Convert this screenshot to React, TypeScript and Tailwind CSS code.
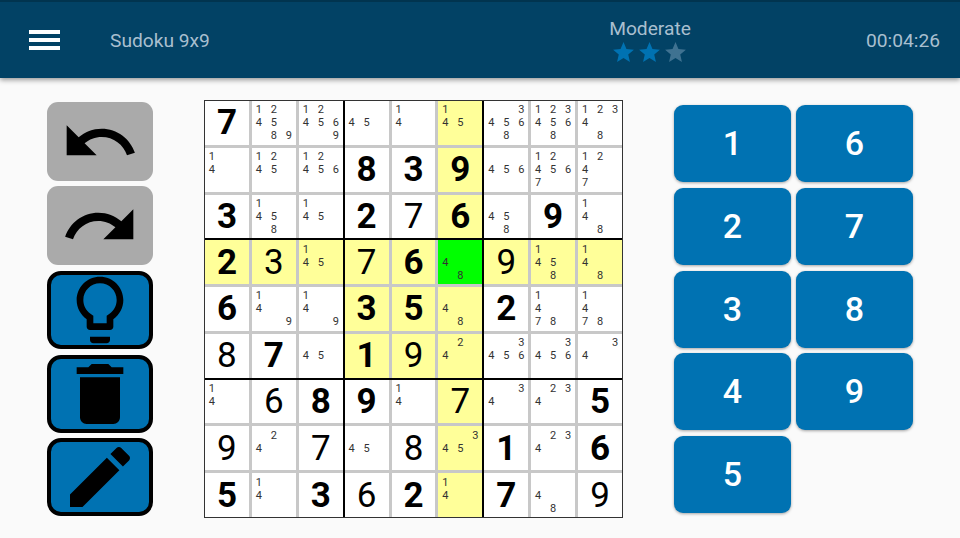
import { Fragment } from 'react'

type Cell = { v?: number; bold?: boolean; n?: number[]; bg?: string }

const g = (v: number): Cell => ({ v, bold: true })
const r = (v: number): Cell => ({ v })
const n = (...d: number[]): Cell => ({ n: d })

const rows: Cell[][] = [
  [g(7), n(1, 2, 4, 5, 8, 9), n(1, 2, 4, 5, 6, 9), n(4, 5), n(1, 4), n(1, 4, 5), n(3, 4, 5, 6, 8), n(1, 2, 3, 4, 5, 6, 8), n(1, 2, 3, 4, 8)],
  [n(1, 4), n(1, 2, 4, 5), n(1, 2, 4, 5, 6), g(8), g(3), g(9), n(4, 5, 6), n(1, 2, 4, 5, 6, 7), n(1, 2, 4, 7)],
  [g(3), n(1, 4, 5, 8), n(1, 4, 5), g(2), r(7), g(6), n(4, 5, 8), g(9), n(1, 4, 8)],
  [g(2), r(3), n(1, 4, 5), r(7), g(6), n(4, 8), r(9), n(1, 4, 5, 8), n(1, 4, 8)],
  [g(6), n(1, 4, 9), n(1, 4, 9), g(3), g(5), n(4, 8), g(2), n(1, 4, 7, 8), n(1, 4, 7, 8)],
  [r(8), g(7), n(4, 5), g(1), r(9), n(2, 4), n(3, 4, 5, 6), n(3, 4, 5, 6), n(3, 4)],
  [n(1, 4), r(6), g(8), g(9), n(1, 4), r(7), n(3, 4), n(2, 3, 4), g(5)],
  [r(9), n(2, 4), r(7), n(4, 5), r(8), n(3, 4, 5), g(1), n(2, 3, 4), g(6)],
  [g(5), n(1, 4), g(3), r(6), g(2), n(1, 4), g(7), n(4, 8), r(9)],
]

const isYellow = (row: number, col: number) =>
  row === 3 || col === 5 || (row >= 3 && row <= 5 && col >= 3 && col <= 5)

const icons = {
  undo: 'M12.5 8c-2.65 0-5.05.99-6.9 2.6L2 7v9h9l-3.62-3.62c1.39-1.16 3.16-1.88 5.12-1.88 3.54 0 6.55 2.31 7.6 5.5l2.37-.78C21.08 11.03 17.15 8 12.5 8z',
  redo: 'M18.4 10.6C16.55 8.99 14.15 8 11.5 8c-4.65 0-8.58 3.03-9.96 7.22L3.9 16c1.05-3.19 4.05-5.5 7.6-5.5 1.95 0 3.73.72 5.12 1.88L13 16h9V7l-3.6 3.6z',
  bulb: 'M9 21c0 .55.45 1 1 1h4c.55 0 1-.45 1-1v-1H9v1zm3-19C8.14 2 5 5.14 5 9c0 2.38 1.19 4.47 3 5.74V17c0 .55.45 1 1 1h6c.55 0 1-.45 1-1v-2.26c1.81-1.27 3-3.36 3-5.74 0-3.86-3.14-7-7-7zm2.85 11.1l-.85.6V16h-4v-2.3l-.85-.6C7.8 12.16 7 10.63 7 9c0-2.76 2.24-5 5-5s5 2.24 5 5c0 1.63-.8 3.16-2.15 4.1z',
  trash: 'M6 19c0 1.1.9 2 2 2h8c1.1 0 2-.9 2-2V7H6v12zM19 4h-3.5l-1-1h-5l-1 1H5v2h14V4z',
  pencil: 'M3 17.25V21h3.75L17.81 9.94l-3.75-3.75L3 17.25zM20.71 7.04c.39-.39.39-1.02 0-1.41l-2.34-2.34c-.39-.39-1.02-.39-1.41 0l-1.83 1.83 3.75 3.75 1.83-1.83z',
}

const star = 'M12 17.27L18.18 21l-1.64-7.19L22 9.24l-7.19-.61L12 2 9.19 8.63 2 9.24l5.46 4.57L5.82 21z'

function ToolBtn({ d, kind, className }: { d: string; kind: 'grey' | 'blue'; className: string }) {
  const skin = kind === 'grey' ? 'bg-[#aaaaaa] rounded-[11px]' : 'bg-[#0072b2] border-[4px] border-black rounded-[14px]'
  return (
    <div className={`w-[106px] flex items-center justify-center overflow-hidden ${skin} ${className}`}>
      <svg viewBox="0 0 24 24" className="w-[80px] h-[80px] shrink-0" fill="#000"><path d={d} /></svg>
    </div>
  )
}

function Notes({ digits }: { digits: number[] }) {
  return (
    <div className="grid grid-cols-[repeat(3,15px)] grid-rows-[repeat(3,13px)] font-['Roboto',sans-serif] text-[11px] leading-[13px] text-center text-[#333]">
      {[1, 2, 3, 4, 5, 6, 7, 8, 9].map((d) => (
        <span key={d}>{digits.includes(d) ? d : ''}</span>
      ))}
    </div>
  )
}

function SudokuCell({ cell, row, col }: { cell: Cell; row: number; col: number }) {
  const selected = row === 3 && col === 5
  const bg = selected ? 'bg-[#00ff00]' : isYellow(row, col) ? 'bg-[#ffff99]' : 'bg-white'
  return (
    <div className={`flex items-center justify-center overflow-hidden ${bg}`}>
      {cell.n ? (
        <Notes digits={cell.n} />
      ) : (
        <span className={`font-['Roboto',sans-serif] text-[35px] leading-none text-black ${cell.bold ? 'font-bold' : 'font-normal'}`}>{cell.v}</span>
      )}
    </div>
  )
}

function Box({ br, bc }: { br: number; bc: number }) {
  const idx = [0, 1, 2]
  return (
    <div className="grid grid-cols-3 grid-rows-3 gap-[3px] bg-[#c8c8c8]">
      {idx.map((i) => (
        <Fragment key={i}>
          {idx.map((j) => (
            <SudokuCell key={j} cell={rows[br * 3 + i][bc * 3 + j]} row={br * 3 + i} col={bc * 3 + j} />
          ))}
        </Fragment>
      ))}
    </div>
  )
}

function NumBtn({ v }: { v: number }) {
  return (
    <div className="h-[77px] rounded-[9px] bg-[#0072b2] flex items-center justify-center text-white text-[34px] font-medium font-['Roboto',sans-serif] shadow-[0_1px_3px_rgba(0,0,0,0.35)]">
      {v}
    </div>
  )
}

export default function App() {
  return (
    <div className="w-[960px] h-[538px] bg-[#fafafa] overflow-hidden font-['Roboto',sans-serif]">
      <header className="relative h-[78px] bg-[#024265] border-t-[2px] border-[#01344f] flex items-center shadow-[0_2px_5px_rgba(0,0,0,0.4)] text-[19.2px] text-[#a9bfcf]">
        <div className="w-[590px] flex items-center">
          <div className="ml-[29px] w-[31px] flex flex-col gap-[4px]">
            <div className="h-[4px] bg-white" />
            <div className="h-[4px] bg-white" />
            <div className="h-[4px] bg-white" />
          </div>
          <span className="ml-[50px] pt-[2px]">Sudoku 9x9</span>
        </div>
        <div className="w-[120px] flex flex-col items-center pt-[2px]">
          <span className="leading-[22px]">Moderate</span>
          <div className="flex gap-[1px] -ml-[2px]">
            <svg viewBox="0 0 24 24" className="w-[25px] h-[25px]" fill="#0072b2"><path d={star} /></svg>
            <svg viewBox="0 0 24 24" className="w-[25px] h-[25px]" fill="#0072b2"><path d={star} /></svg>
            <svg viewBox="0 0 24 24" className="w-[25px] h-[25px]" fill="#3f7291"><path d={star} /></svg>
          </div>
        </div>
        <span className="flex-1 text-right pr-[20px] pt-[2px]">00:04:26</span>
      </header>

      <main className="flex items-start">
        <div className="ml-[47px] mt-[24px] flex flex-col">
          <ToolBtn d={icons.undo} kind="grey" className="h-[79px]" />
          <ToolBtn d={icons.redo} kind="grey" className="h-[79px] mt-[5px]" />
          <ToolBtn d={icons.bulb} kind="blue" className="h-[78px] mt-[6px]" />
          <ToolBtn d={icons.trash} kind="blue" className="h-[78px] mt-[6px]" />
          <ToolBtn d={icons.pencil} kind="blue" className="h-[78px] mt-[5px]" />
        </div>

        <div className="ml-[51px] mt-[22px] w-[419px] h-[418px] grid grid-cols-3 grid-rows-3 gap-[2px] bg-black border border-[#333]">
          {[0, 1, 2].map((br) => (
            <Fragment key={br}>
              {[0, 1, 2].map((bc) => (
                <Box key={bc} br={br} bc={bc} />
              ))}
            </Fragment>
          ))}
        </div>

        <div className="ml-[51px] mt-[27px] w-[239px] grid grid-cols-2 gap-x-[5px] gap-y-[5.75px] grid-flow-col grid-rows-5">
          {[1, 2, 3, 4, 5, 6, 7, 8, 9].map((v) => (
            <NumBtn key={v} v={v} />
          ))}
        </div>
      </main>
    </div>
  )
}
